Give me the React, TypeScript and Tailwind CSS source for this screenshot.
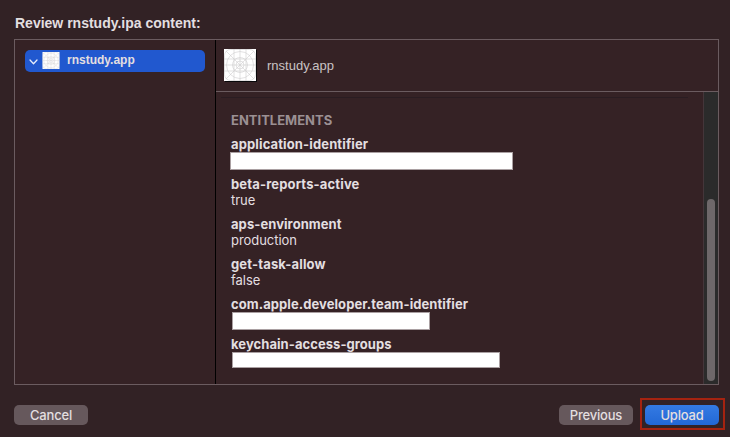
type Entitlement = { name: string; spacing: string; value?: string; bar?: string };

const entitlements: Entitlement[] = [
  { name: 'application-identifier', spacing: 'tracking-[0.13px]', bar: '-ml-px w-[283px] h-[18px]' },
  { name: 'beta-reports-active', spacing: 'tracking-[0.15px]', value: 'true' },
  { name: 'aps-environment', spacing: 'tracking-[0.07px]', value: 'production' },
  { name: 'get-task-allow', spacing: 'tracking-[0.16px]', value: 'false' },
  { name: 'com.apple.developer.team-identifier', spacing: 'tracking-[0.08px]', bar: 'ml-px w-[198px] h-[18px]' },
  { name: 'keychain-access-groups', spacing: 'tracking-[0.06px]', bar: 'ml-px w-[268px] h-4' },
];

function AppIcon({ className }: { className: string }) {
  return (
    <svg viewBox="0 0 32 32" className={className} fill="none" stroke="#cfcccf" strokeWidth="0.6">
      <rect width="32" height="32" fill="#fff" stroke="none" />
      <rect x="0.5" y="0.5" width="31" height="31" rx="6" />
      <circle cx="16" cy="16" r="13.5" />
      <circle cx="16" cy="16" r="7.5" />
      <circle cx="16" cy="16" r="4" />
      <path d="M0 16h32M16 0v32M0 10h32M0 22h32M10 0v32M22 0v32M2 2l28 28M30 2L2 30" />
    </svg>
  );
}

export default function App() {
  return (
    <div className="flex h-[437px] w-[730px] flex-col overflow-hidden bg-[#322225] font-['Inter',sans-serif] text-[13px] leading-4 text-[#e3dfe0]">
      <h1 className="ml-[15px] mt-[15px] h-6 whitespace-nowrap font-['Liberation_Sans',sans-serif] text-[14px] font-bold">
        Review rnstudy.ipa content:
      </h1>
      <main className="ml-[14px] flex h-[346px] w-[705px] border border-[#6b5c60] bg-[#352225]">
        <aside className="w-[201px] shrink-0 border-r border-black pl-[10px] pt-[10px]">
          <div className="flex h-[22px] w-[180px] items-center rounded-[5px] bg-[#2158cf]">
            <svg viewBox="0 0 9 6" className="ml-1 mt-px h-[6px] w-[9px]" fill="none" stroke="#e8edfa" strokeWidth="1.3" strokeLinecap="round" strokeLinejoin="round">
              <path d="M1 1l3.5 3.7L8 1" />
            </svg>
            <AppIcon className="ml-1 -mt-px h-[17px] w-[18px]" />
            <span className="ml-[7px] -mt-[2px] font-['Liberation_Sans',sans-serif] text-[12px] font-bold">rnstudy.app</span>
          </div>
        </aside>
        <section className="flex min-w-0 flex-1 flex-col">
          <header className="flex h-[52px] shrink-0 items-center border-b border-[#6b5c60] pl-2">
            <AppIcon className="-mt-px h-8 w-8 shadow-[1px_1px_0_#08080a]" />
            <span className="ml-[11px] font-['Liberation_Sans',sans-serif] text-[13px] text-[#c9c2c4]">rnstudy.app</span>
          </header>
          <div className="flex min-h-0 flex-1">
            <div className="flex-1 pl-[15px]">
              <div className="-ml-[10px] mt-[5px] h-px w-[467px] bg-[#2a1d22]" />
              <h2 className="mt-[14px] text-[13px] font-bold leading-4 text-[#9b9093]">ENTITLEMENTS</h2>
              <dl className="mt-2">
                {entitlements.map(({ name, spacing, value, bar }) => (
                  <div key={name} className="h-10 whitespace-nowrap">
                    <dt className={`h-4 font-bold ${spacing}`}>{name}</dt>
                    <dd className="tracking-[-0.05px]">
                      {bar ? <div className={`border border-[#aaa0a2] bg-white ${bar}`} /> : value}
                    </dd>
                  </div>
                ))}
              </dl>
            </div>
            <div className="flex w-[15px] justify-center border-l border-[#44363a] bg-[#2b2b2b]">
              <div className="mt-[107px] h-[182px] w-2 rounded-full bg-[#6e686a]" />
            </div>
          </div>
        </section>
      </main>
      <footer className="flex pl-[14px] pt-[13px] text-[13px] font-medium tracking-[-0.2px]">
        <button className="mt-[7px] h-5 w-[74px] rounded-[5px] bg-[#66585c] leading-[18px] pb-px">Cancel</button>
        <button className="ml-auto mt-[7px] h-5 w-[74px] rounded-[5px] bg-[#66585c] leading-[18px] pb-px">Previous</button>
        <div className="ml-[7px] mr-[5px] h-8 w-[85px] border-2 border-[#a52310] pl-[3px] pt-[5px]">
          <button className="block h-5 w-[74px] rounded-[5px] bg-linear-to-b from-[#347ae3] to-[#2268d5] pb-px leading-[18px]">Upload</button>
        </div>
      </footer>
    </div>
  );
}
